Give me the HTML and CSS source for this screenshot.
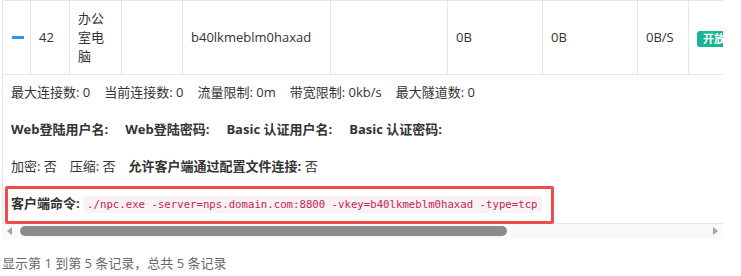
FILE: index.html
```html
<!DOCTYPE html>
<html lang="zh-CN">
<head>
<meta charset="utf-8">
<title>客户端列表</title>
<link rel="stylesheet" href="styles.css">
</head>
<body>
<div class="table-box">
  <div class="scroller">
    <table class="grid">
      <colgroup>
        <col class="c-toggle">
        <col class="c-id">
        <col class="c-remark">
        <col class="c-host">
        <col class="c-vkey">
        <col class="c-addr">
        <col class="c-in">
        <col class="c-out">
        <col class="c-speed">
        <col class="c-status">
        <col class="c-conn">
        <col class="c-op">
      </colgroup>
      <tbody>
        <tr class="stub">
          <td></td><td></td><td></td><td></td><td></td><td></td><td></td><td></td><td></td><td></td><td></td><td></td>
        </tr>
        <tr class="data-row">
          <td class="toggle"><span class="minus"></span></td>
          <td>42</td>
          <td>办公室电脑</td>
          <td></td>
          <td>b40lkmeblm0haxad</td>
          <td></td>
          <td>0B</td>
          <td>0B</td>
          <td>0B/S</td>
          <td><span class="badge">开放</span></td>
          <td><span class="badge badge-off">离线</span></td>
          <td></td>
        </tr>
        <tr class="detail-row">
          <td colspan="12">
            <div class="line items">
              <span>最大连接数: 0</span>
              <span>当前连接数: 0</span>
              <span>流量限制: 0m</span>
              <span>带宽限制: 0kb/s</span>
              <span>最大隧道数: 0</span>
            </div>
            <div class="line items items-wide">
              <b>Web登陆用户名:</b>
              <b>Web登陆密码:</b>
              <b>Basic 认证用户名:</b>
              <b>Basic 认证密码:</b>
            </div>
            <div class="line items items-tight">
              <span>加密: 否</span>
              <span>压缩: 否</span>
              <span><b>允许客户端通过配置文件连接:</b> 否</span>
            </div>
            <div class="line last"><b>客户端命令:</b> <code>./npc.exe -server=nps.domain.com:8800 -vkey=b40lkmeblm0haxad -type=tcp</code></div>
          </td>
        </tr>
      </tbody>
    </table>
  </div>
  <div class="hscroll">
    <span class="arrow-box"><span class="arrow arrow-left"></span></span>
    <span class="track"><span class="thumb"></span></span>
    <span class="arrow-box"><span class="arrow arrow-right"></span></span>
  </div>
  <div class="mark"></div>
</div>
<div class="pagination-detail">显示第 1 到第 5 条记录，总共 5 条记录</div>
</body>
</html>
```

FILE: styles.css
```css
html, body {
  margin: 0;
  padding: 0;
  background: #ffffff;
}

body {
  font-family: "Open Sans", "Noto Sans CJK SC", sans-serif;
  font-size: 13px;
  color: #333333;
  line-height: 1.42857;
}

.table-box {
  position: relative;
  width: 721px;
  margin-left: 2px;
}

.scroller {
  overflow: hidden;
  width: 721px;
}

.grid {
  border-collapse: collapse;
  table-layout: fixed;
  width: 1030px;
}

.c-toggle { width: 28px; }
.c-id { width: 39px; }
.c-remark { width: 52px; }
.c-host { width: 61px; }
.c-vkey { width: 148px; }
.c-addr { width: 117px; }
.c-in { width: 95px; }
.c-out { width: 95px; }
.c-speed { width: 51px; }
.c-status { width: 72px; }
.c-conn { width: 90px; }
.c-op { width: 182px; }

.grid td {
  border: 1px solid #e6e6e6;
  padding: 8px;
  vertical-align: middle;
  text-align: left;
}

.stub td {
  padding: 0;
  height: 0;
  border-top: none;
}

.data-row td {
  line-height: 19px;
}

.toggle {
  text-align: center;
}

.minus {
  display: block;
  width: 12px;
  height: 3px;
  margin-left: 1px;
  background: #2b95f4;
}

.badge {
  display: inline-block;
  background: #1ab394;
  color: #ffffff;
  font-weight: 700;
  font-size: 11px;
  line-height: 16px;
  padding: 0 6px;
  border-radius: 3px;
  vertical-align: middle;
}

.badge-off {
  background: #ed5565;
}

.detail-row td {
  padding: 8px;
  line-height: 18.57px;
}

.line {
  margin-bottom: 18.57px;
  white-space: nowrap;
}

.line.last {
  margin-bottom: 0;
}

.items {
  display: flex;
  gap: 14px;
}

.items-wide {
  gap: 17px;
}

.items-tight {
  gap: 13px;
}

code {
  font-family: "DejaVu Sans Mono", "Liberation Mono", monospace;
  font-size: 10.7px;
  color: #c7254e;
  background: #f9f2f4;
  padding: 2px 4px;
  border-radius: 4px;
}

.hscroll {
  display: flex;
  align-items: center;
  height: 15px;
  background: #f9f9f9;
}

.arrow-box {
  width: 15px;
  height: 15px;
  display: flex;
  align-items: center;
  justify-content: center;
  flex: none;
}

.track {
  flex: 1;
  height: 15px;
  display: flex;
  align-items: center;
}

.thumb {
  display: block;
  width: 487px;
  height: 10px;
  margin-left: 3px;
  background: #8b8b8b;
  border-radius: 5px;
}

.arrow {
  width: 0;
  height: 0;
  border-top: 4px solid transparent;
  border-bottom: 4px solid transparent;
}

.arrow-left {
  border-right: 5px solid #a3a3a3;
}

.arrow-right {
  border-left: 5px solid #a3a3a3;
}

.mark {
  position: absolute;
  left: 3px;
  top: 186px;
  width: 549px;
  height: 38px;
  box-sizing: border-box;
  border: 3px solid #f04c4c;
  border-radius: 2px;
  pointer-events: none;
}

.pagination-detail {
  margin-top: 15px;
  margin-left: 2px;
  font-size: 13px;
  line-height: 18px;
  color: #676a6c;
}
```
